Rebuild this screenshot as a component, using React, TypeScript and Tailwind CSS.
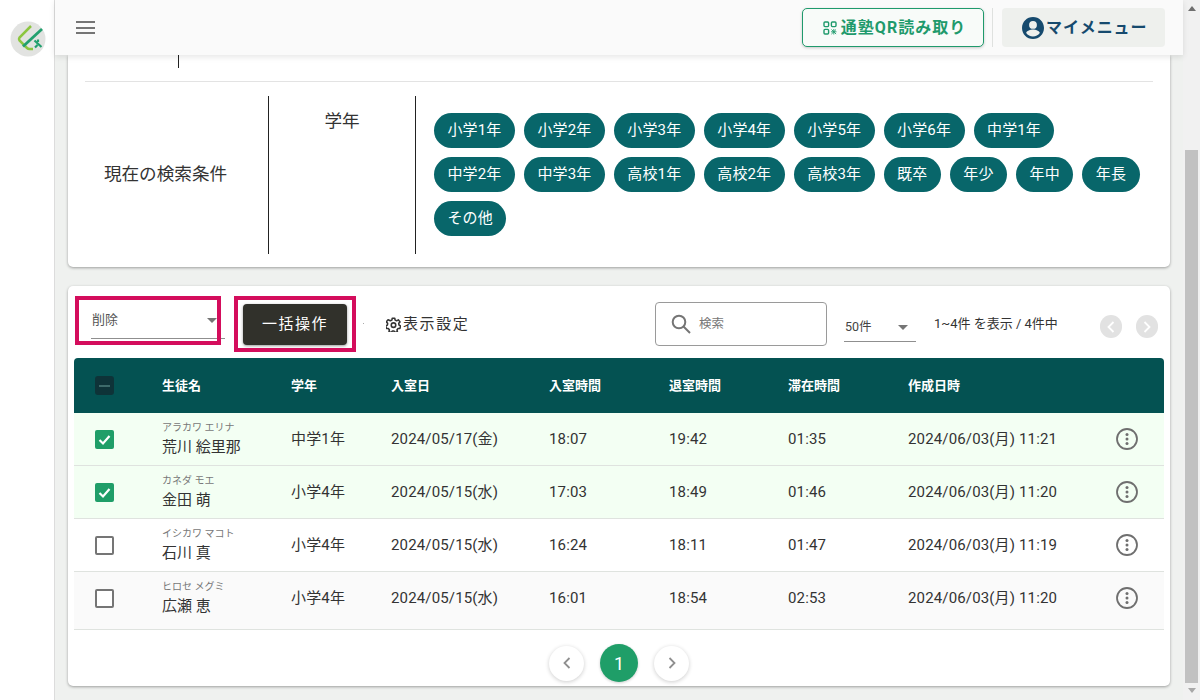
import React from "react";

const font = { fontFamily: '"Roboto","Noto Sans CJK JP",sans-serif' };

const chips = [
  ["小学1年", "小学2年", "小学3年", "小学4年", "小学5年", "小学6年", "中学1年"],
  ["中学2年", "中学3年", "高校1年", "高校2年", "高校3年", "既卒", "年少", "年中", "年長"],
  ["その他"],
];

const rows = [
  { kana: "アラカワ エリナ", name: "荒川 絵里那", grade: "中学1年", date: "2024/05/17(金)", a: "18:07", b: "19:42", c: "01:35", d: "2024/06/03(月) 11:21", checked: true, bg: "bg-[#f3fff3]", h: "h-[53px]" },
  { kana: "カネダ モエ", name: "金田 萌", grade: "小学4年", date: "2024/05/15(水)", a: "17:03", b: "18:49", c: "01:46", d: "2024/06/03(月) 11:20", checked: true, bg: "bg-[#f3fff3]", h: "h-[53px]" },
  { kana: "イシカワ マコト", name: "石川 真", grade: "小学4年", date: "2024/05/15(水)", a: "16:24", b: "18:11", c: "01:47", d: "2024/06/03(月) 11:19", checked: false, bg: "bg-white", h: "h-[53px]" },
  { kana: "ヒロセ メグミ", name: "広瀬 恵", grade: "小学4年", date: "2024/05/15(水)", a: "16:01", b: "18:54", c: "02:53", d: "2024/06/03(月) 11:20", checked: false, bg: "bg-[#fafafa]", h: "h-[58px] pb-[5px]" },
];

const cols = "grid grid-cols-[88px_129px_100px_158px_120px_119px_120px_207px_49px] items-center";

function Logo() {
  return (
    <svg width="36" height="36" viewBox="0 0 36 36">
      <circle cx="18" cy="18" r="17.500" fill="#e2e3e1" />
      <path d="M21 5 L9.500 16.500 Q8.500 18 9.500 19.500 L17 27 Q18 28 19.500 28 L23 28" fill="none" stroke="#8cc63f" strokeWidth="2.500" />
      <path d="M13 25.500 L32 8" stroke="#22a06f" strokeWidth="2.800" fill="none" />
      <path d="M24.500 19.500 L31.500 26 M28 18.500 L28 21 M25 26.500 L27.500 24" stroke="#22a06f" strokeWidth="2.200" fill="none" />
    </svg>
  );
}

function QrIcon() {
  return (
    <svg width="14" height="14" viewBox="0 0 14 14" fill="none" stroke="#1f9a6c" strokeWidth="1.400">
      <rect x="1" y="1" width="4.600" height="4.600" rx="1" />
      <rect x="8.400" y="1" width="4.600" height="4.600" rx="1" />
      <rect x="1" y="8.400" width="4.600" height="4.600" rx="1" />
      <path d="M8.500 8.500l4.600 4.600M13 8.500l-4.600 4.600M10.800 8v5.500M8 10.800h5.500" strokeWidth="0.900" />
    </svg>
  );
}

function Account() {
  return (
    <svg width="24" height="24" viewBox="0 0 24 24" fill="#164a6e">
      <path d="M12 1C5.900 1 1 5.900 1 12s4.900 11 11 11 11-4.900 11-11S18.100 1 12 1zm0 4a3.900 3.900 0 1 1 0 7.800A3.900 3.900 0 0 1 12 5zm0 15.600c-2.800 0-5.300-1.400-6.800-3.600.1-2.200 4.500-3.500 6.800-3.500s6.700 1.300 6.800 3.500c-1.500 2.200-4 3.600-6.800 3.600z" />
    </svg>
  );
}

function Gear() {
  return (
    <svg width="15" height="15" viewBox="0 0 24 24" fill="none" stroke="#333" strokeWidth="2.500" strokeLinejoin="round">
      <path d="M10 2h4l.6 3 2.400 1.100 2.700-1.600 2.700 3.300-2 2.300.3 2.700 2.600 1.400-1 4-3 .1-1.700 2.100.6 3-3.800 1.300-1.700-2.400h-2.400l-1.700 2.400-3.800-1.300.6-3-1.700-2.100-3-.1-1-4 2.600-1.400.3-2.700-2-2.300 2.700-3.300L7 6.100 9.400 5z" />
      <circle cx="12" cy="13" r="3.600" />
    </svg>
  );
}

function Search() {
  return (
    <svg width="22" height="22" viewBox="0 0 22 22" fill="none" stroke="#757575" strokeWidth="2">
      <circle cx="9" cy="9" r="6.300" />
      <path d="M13.500 13.500L20 20" />
    </svg>
  );
}

function MoreCircle() {
  return (
    <svg width="24" height="24" viewBox="0 0 24 24" fill="none">
      <circle cx="12" cy="12" r="10" stroke="#6f6f6f" strokeWidth="1.800" />
      <circle cx="12" cy="7.500" r="1.500" fill="#6f6f6f" />
      <circle cx="12" cy="12" r="1.500" fill="#6f6f6f" />
      <circle cx="12" cy="16.500" r="1.500" fill="#6f6f6f" />
    </svg>
  );
}

function Chevron({ dir, color, size = 14 }: { dir: "l" | "r"; color: string; size?: number }) {
  return (
    <svg width={size} height={size} viewBox="0 0 14 14" fill="none" stroke={color} strokeWidth="1.800">
      <path d={dir === "l" ? "M9.500 2L4.500 7l5 5" : "M4.500 2l5 5-5 5"} />
    </svg>
  );
}

function Caret({ className }: { className?: string }) {
  return <span className={`block w-0 h-0 border-x-[5px] border-x-transparent border-t-[5px] border-t-[#757575] ${className ?? ""}`} />;
}

export default function App() {
  return (
    <div style={font} className="flex w-[1200px] h-[700px] overflow-hidden bg-[#eff1ef] text-[#333]">
      {/* sidebar */}
      <aside className="w-[55px] shrink-0 bg-white border-r border-[#dcdcdc] pt-[21px] pl-[9.500px]">
        <Logo />
      </aside>

      {/* main */}
      <div className="flex flex-col w-[1128px] shrink-0">
        <header className="relative z-10 h-[55px] shrink-0 bg-[#fafafa] shadow-[0_2px_6px_rgba(0,0,0,0.10)] flex items-center pl-[21px] pr-[18px]">
          <div className="flex flex-col gap-[3.500px] w-[19px]">
            <span className="h-[2px] bg-[#757575]" />
            <span className="h-[2px] bg-[#757575]" />
            <span className="h-[2px] bg-[#757575]" />
          </div>
          <div className="ml-auto flex items-center">
            <button className="w-[182px] h-[39px] pl-[3px] rounded-[5px] border border-[#1f9a6c] bg-[#f8fbf9] shadow-[0_1px_3px_rgba(0,0,0,0.2)] flex items-center justify-center gap-[4px] text-[#1f9a6c] text-[16px] font-bold tracking-[1px]">
              <QrIcon />
              通塾QR読み取り
            </button>
            <span className="w-px h-[39px] bg-[#dfe1df] ml-[8px] mr-[9px]" />
            <button className="w-[163px] h-[39px] rounded-[4px] bg-[#eef0ed] flex items-center pl-[19px] gap-[1px] text-[#164a6e] text-[16px] font-bold tracking-[0.9px]">
              <Account />
              マイメニュー
            </button>
          </div>
        </header>

        <main className="flex-1 px-[13px] overflow-hidden">
          {/* condition card */}
          <section className="h-[212px] bg-white rounded-b-[5px] shadow-[0_1px_3px_rgba(0,0,0,0.35)] px-[17px]">
            <div className="h-[27px] border-b border-[#e3e3e3] pl-[93px]">
              <span className="block w-px h-[13px] bg-[#222]" />
            </div>
            <div className="mt-[14px] flex h-[158px]">
              <div className="w-[184px] shrink-0 border-r border-[#222] flex items-center justify-center text-[17.600px] text-[#333] pr-[22px] pb-[2px]">
                現在の検索条件
              </div>
              <div className="w-[147px] shrink-0 border-r border-[#222] flex justify-center pt-[12px] text-[17.600px] leading-[26px]">
                学年
              </div>
              <div className="pl-[18px] pt-[17px] flex flex-col gap-[9px]">
                {chips.map((row, i) => (
                  <div key={i} className="flex gap-[9px]">
                    {row.map((c) => (
                      <span key={c} className="h-[35px] rounded-full bg-[#08666a] text-white text-[15px] tracking-[0.12px] flex items-center px-[13.500px]">
                        {c}
                      </span>
                    ))}
                  </div>
                ))}
              </div>
            </div>
          </section>

          {/* list card */}
          <section className="mt-[19px] h-[400px] bg-white rounded-[5px] shadow-[0_1px_3px_rgba(0,0,0,0.35)] px-[6px]">
            <div className="relative h-[72px] flex">
              <div className="absolute left-[1px] top-[10px] w-[146px] h-[49px] border-[4px] border-[#d40d5c]" />
              <div className="absolute left-[160px] top-[10px] w-[122px] h-[56px] border-[4px] border-[#d40d5c]" />

              <div className="ml-[17px] mt-[17px] w-[134px] h-[36px] border-b border-[#8f8f8f] flex items-start justify-between pl-[1px] pr-[8px] text-[13px] text-[#555] shrink-0">
                <span className="leading-[35px] -mt-[1px]">削除</span>
                <Caret className="mt-[15px]" />
              </div>
              <button className="ml-[18px] mt-[18px] w-[104px] h-[41px] shrink-0 rounded-[4px] bg-[#31312b] text-white text-[15px] tracking-[1.500px] shadow-[0_1px_3px_rgba(0,0,0,0.4)]">
                一括操作
              </button>
              <span className="ml-[16px] mt-[37px] w-px h-px bg-[#aaa] shrink-0" />
              <div className="ml-[22px] mt-[18px] w-[84px] shrink-0 h-[40px] flex items-center gap-[2px] text-[15px] text-[#333] tracking-[1.600px]">
                <Gear />
                <span className="whitespace-nowrap">表示設定</span>
              </div>
              <div className="ml-[185px] mt-[16px] w-[172px] shrink-0 h-[44px] border border-[#9a9a9a] rounded-[4px] flex items-center pl-[14px] gap-[7px] text-[12.500px] text-[#777]">
                <Search />
                検索
              </div>
              <div className="ml-[17px] mt-[28px] w-[72px] shrink-0 h-[28px] border-b border-[#8f8f8f] flex items-center justify-between pl-[1px] pr-[8px] text-[12.500px] text-[#444]">
                <span>50件</span>
                <Caret />
              </div>
              <div className="ml-[18px] mt-[28px] w-[125px] shrink-0 whitespace-nowrap text-[13px] text-[#333] leading-[20px]">1~4件 を表示 / 4件中</div>
              <div className="ml-[41px] mt-[29px] flex gap-[14px] shrink-0">
                <span className="w-[22px] h-[23px] rounded-full bg-[#e2e2e2] flex items-center justify-center"><Chevron dir="l" color="#fff" /></span>
                <span className="w-[22px] h-[23px] rounded-full bg-[#e2e2e2] flex items-center justify-center"><Chevron dir="r" color="#fff" /></span>
              </div>
            </div>

            <div className={`${cols} h-[55px] bg-[#045252] rounded-t-[4px] text-white text-[13px] font-bold`}>
              <div className="pl-[21px]">
                <span className="w-[19px] h-[19px] rounded-[3px] bg-[#0e3338] flex items-center justify-center">
                  <span className="w-[11px] h-[2px] bg-[#3d6a6a]" />
                </span>
              </div>
              <div>生徒名</div>
              <div>学年</div>
              <div>入室日</div>
              <div>入室時間</div>
              <div>退室時間</div>
              <div>滞在時間</div>
              <div>作成日時</div>
              <div />
            </div>

            {rows.map((r) => (
              <div key={r.name} className={`${cols} ${r.h} ${r.bg} border-b border-[#dfe3df] text-[15px] tracking-[0.15px] text-[#333]`}>
                <div className="pl-[21px]">
                  {r.checked ? (
                    <span className="w-[19px] h-[19px] rounded-[2px] bg-[#1f9e68] flex items-center justify-center">
                      <svg width="15" height="15" viewBox="0 0 15 15" fill="none" stroke="#fff" strokeWidth="2.200"><path d="M2.500 8l3.500 3.500 6.500-7.500" /></svg>
                    </span>
                  ) : (
                    <span className="block w-[19px] h-[19px] rounded-[2px] border-2 border-[#757575] bg-white" />
                  )}
                </div>
                <div className="flex flex-col">
                  <span className="text-[10px] tracking-normal leading-[14px] text-[#777]">{r.kana}</span>
                  <span className="text-[15px] tracking-normal leading-[22px] mt-[1px]">{r.name}</span>
                </div>
                <div>{r.grade}</div>
                <div>{r.date}</div>
                <div>{r.a}</div>
                <div>{r.b}</div>
                <div>{r.c}</div>
                <div>{r.d}</div>
                <div><MoreCircle /></div>
              </div>
            ))}

            {/* pagination */}
            <div className="mt-[14px] flex justify-center items-center gap-[16px]">
              <span className="w-[35px] h-[35px] rounded-full bg-white shadow-[0_1px_4px_rgba(0,0,0,0.2)] flex items-center justify-center"><Chevron dir="l" color="#8f8f8f" /></span>
              <span className="w-[38px] h-[38px] rounded-full bg-[#1f9e68] text-white text-[18px] flex items-center justify-center shadow-[0_1px_3px_rgba(0,0,0,0.2)]">1</span>
              <span className="w-[35px] h-[35px] rounded-full bg-white shadow-[0_1px_4px_rgba(0,0,0,0.2)] flex items-center justify-center"><Chevron dir="r" color="#8f8f8f" /></span>
            </div>
          </section>
        </main>
      </div>

      {/* scrollbar */}
      <div className="w-[17px] shrink-0 bg-[#f1f1f1] flex flex-col items-center">
        <span className="mt-[6px] h-0 w-0 border-x-[4px] border-x-transparent border-b-[5px] border-b-[#6f6f6f]" />
        <span className="mt-[139px] w-[13px] h-[533px] bg-[#c1c1c1]" />
        <span className="mt-[5px] h-0 w-0 border-x-[4px] border-x-transparent border-t-[5px] border-t-[#a8a8a8]" />
      </div>
    </div>
  );
}
